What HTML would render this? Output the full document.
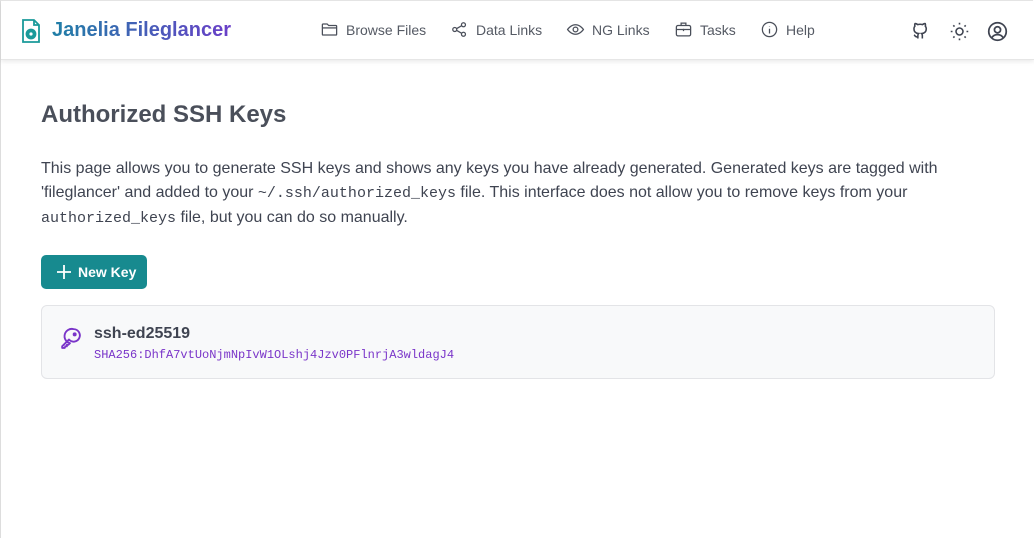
<!DOCTYPE html>
<html><head><style>
body{margin:0;width:1034px;height:538px;overflow:hidden;background:#fff;font-family:"Liberation Sans",sans-serif;color:#3f4451;}
.frame{position:absolute;left:0;top:0;width:1033px;height:538px;border-left:1px solid #ddd;border-top:1px solid #e5e5e5;box-sizing:border-box;}
.hdr{position:absolute;left:1px;top:1px;width:1033px;height:58px;background:#fff;box-shadow:0 2px 4px rgba(0,0,0,.08);border-bottom:1px solid #e6e6e6;}
.logo{position:absolute;left:20px;top:17px;}
.brand{position:absolute;left:51px;top:18px;font-size:20px;font-weight:bold;background:linear-gradient(90deg,#1f7fa6,#6a3fc8);-webkit-background-clip:text;color:transparent;}
.nav{position:absolute;top:19px;font-size:14px;color:#555a64;display:flex;align-items:center;gap:7px;}
.nav svg{width:19px;height:19px;}
.ic{position:absolute;top:20px;}
h1{position:absolute;left:41px;top:101px;margin:0;font-size:24px;color:#4a4f5a;}
p{position:absolute;left:41px;top:157px;margin:0;width:920px;font-size:16px;line-height:24px;color:#3f4451;}
code{font-family:"Liberation Mono",monospace;font-size:15px;}
.btn{position:absolute;left:41px;top:255px;width:106px;height:34px;background:#178a8f;border-radius:5px;color:#fff;font-size:14px;font-weight:bold;}
.card{position:absolute;left:41px;top:305px;width:954px;height:74px;box-sizing:border-box;border:1px solid #e3e4e7;border-radius:6px;background:#f8f9fa;}
.kn{position:absolute;left:52px;top:19px;font-size:16px;font-weight:bold;color:#3f4451;}
.fp{position:absolute;left:52px;top:42px;font-family:"Liberation Mono",monospace;font-size:12px;color:#7a35c9;}
</style></head><body>
<div class="frame"></div>
<div class="hdr">
<svg class="logo" width="20" height="26" viewBox="0 0 20 26" fill="none" stroke="#1a9a9a" stroke-width="1.8"><path d="M2 2h11l5 5v17H2z"/><path d="M13 2v5h5"/><circle cx="10" cy="16" r="4.5" fill="#1a9a9a"/><circle cx="10" cy="16" r="1.6" fill="#fff" stroke="none"/></svg>
<div class="brand">Janelia Fileglancer</div>
<div class="nav" style="left:319px"><svg viewBox="0 0 24 24" fill="none" stroke="#4a4f5a" stroke-width="1.6"><path d="M3 6a1 1 0 011-1h5l2 2h9a1 1 0 011 1v10a1 1 0 01-1 1H4a1 1 0 01-1-1z"/><path d="M3 10h18"/></svg>Browse Files</div>
<div class="nav" style="left:449px"><svg viewBox="0 0 24 24" fill="none" stroke="#4a4f5a" stroke-width="1.6"><circle cx="6" cy="12" r="2.5"/><circle cx="17" cy="6" r="2.5"/><circle cx="17" cy="18" r="2.5"/><path d="M8.2 11l6.6-3.8M8.2 13l6.6 3.8"/></svg>Data Links</div>
<div class="nav" style="left:565px"><svg viewBox="0 0 24 24" fill="none" stroke="#4a4f5a" stroke-width="1.6"><path d="M2 12s4-6 10-6 10 6 10 6-4 6-10 6S2 12 2 12z"/><circle cx="12" cy="12" r="3"/></svg>NG Links</div>
<div class="nav" style="left:673px"><svg viewBox="0 0 24 24" fill="none" stroke="#4a4f5a" stroke-width="1.6"><rect x="3" y="7" width="18" height="13" rx="2"/><path d="M9 7V4h6v3M3 12h18M12 11v3"/></svg>Tasks</div>
<div class="nav" style="left:759px"><svg viewBox="0 0 24 24" fill="none" stroke="#4a4f5a" stroke-width="1.6"><circle cx="12" cy="12" r="9"/><path d="M12 11v6M12 7.5v.5"/></svg>Help</div>
<svg class="ic" style="left:909px" width="21" height="21" viewBox="0 0 24 24" fill="none" stroke="#3f4451" stroke-width="1.8"><path d="M9 20v-3.5c0-1 .3-1.7.8-2.2-3-.3-5.3-1.5-5.3-5.5 0-1.1.4-2.1 1.1-2.9-.1-.3-.5-1.4.1-2.9 0 0 1-.3 3.1 1.1a10 10 0 015.5 0c2.1-1.4 3.1-1.1 3.1-1.1.6 1.5.2 2.6.1 2.9.7.8 1.1 1.8 1.1 2.9 0 4-2.3 5.2-5.3 5.5.5.5.8 1.2.8 2.2V20M9 18c-3 1-3-1.5-4.5-2"/></svg>
<svg class="ic" style="left:948px" width="21" height="21" viewBox="0 0 24 24" fill="none" stroke="#3f4451" stroke-width="1.8"><circle cx="12" cy="12" r="4"/><path d="M12 2v2M12 20v2M2 12h2M20 12h2M4.9 4.9l1.4 1.4M17.7 17.7l1.4 1.4M4.9 19.1l1.4-1.4M17.7 6.3l1.4-1.4"/></svg>
<svg class="ic" style="left:986px" width="21" height="21" viewBox="0 0 24 24" fill="none" stroke="#3f4451" stroke-width="2"><circle cx="12" cy="12" r="10"/><circle cx="12" cy="10" r="3.5"/><path d="M5.5 19c1.5-2.5 3.8-3.5 6.5-3.5s5 1 6.5 3.5"/></svg>
</div>
<h1>Authorized SSH Keys</h1>
<p>This page allows you to generate SSH keys and shows any keys you have already generated. Generated keys are tagged with 'fileglancer' and added to your <code>~/.ssh/authorized_keys</code> file. This interface does not allow you to remove keys from your <code>authorized_keys</code> file, but you can do so manually.</p>
<div class="btn"><svg style="position:absolute;left:15px;top:9px" width="16" height="16" viewBox="0 0 16 16" stroke="#fff" stroke-width="1.8"><path d="M8 1v14M1 8h14"/></svg><span style="position:absolute;left:37px;top:9px">New Key</span></div>
<div class="card">
<svg style="position:absolute;left:16px;top:20px" width="25" height="25" viewBox="0 0 24 24" fill="none" stroke="#7a35c9" stroke-width="1.8" stroke-linejoin="round"><path d="M15 3a6 6 0 11-4.5 10L4 19.5V21h2.5l.5-1.5h1.5V18H10l1.5-1.5A6 6 0 0115 3z"/><circle cx="16" cy="8" r="1" fill="#7a35c9"/></svg>
<div class="kn">ssh-ed25519</div>
<div class="fp">SHA256:DhfA7vtUoNjmNpIvW1OLshj4Jzv0PFlnrjA3wldagJ4</div>
</div>
</body></html>
